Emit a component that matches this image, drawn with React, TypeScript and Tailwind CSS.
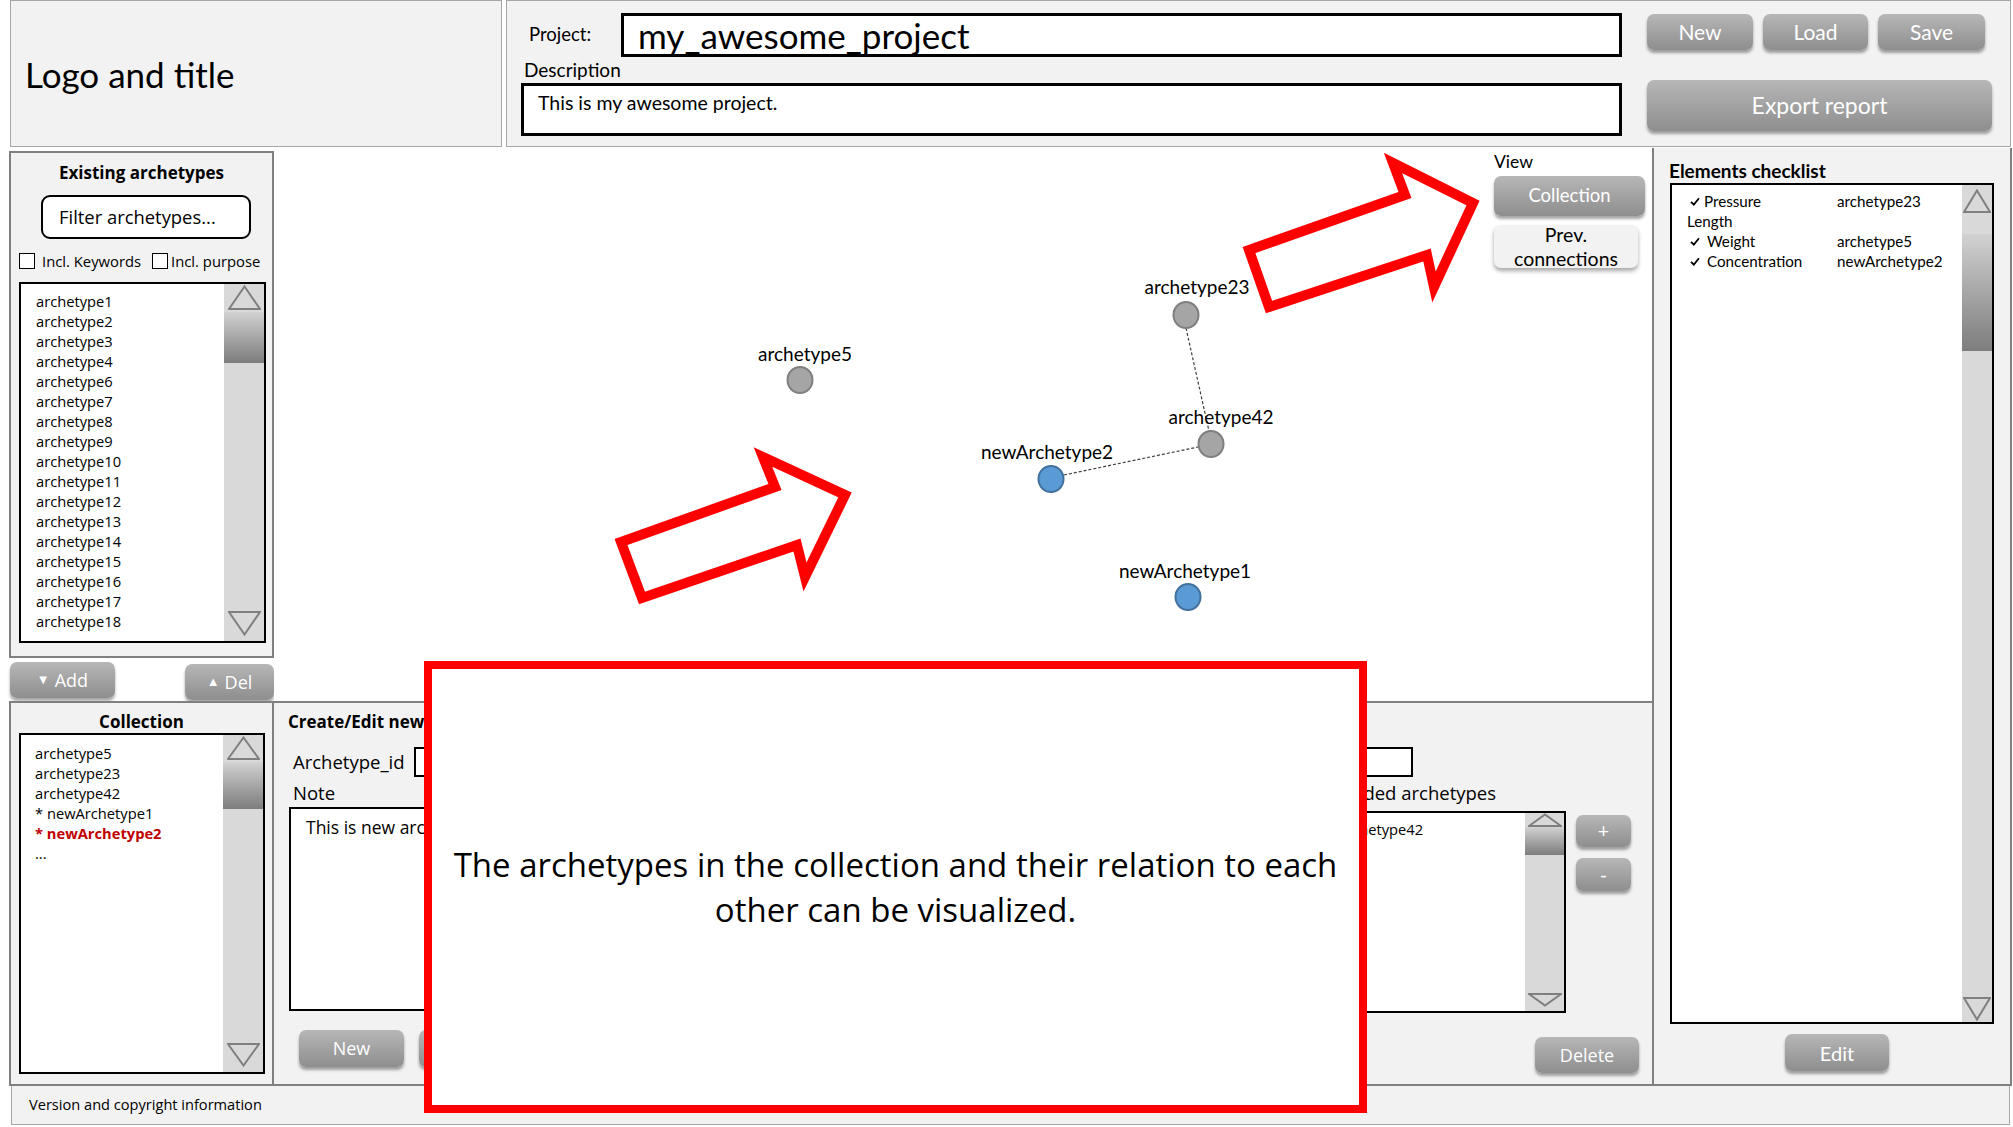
import React from "react";

const CAL = "[font-family:Lato,sans-serif]";
const SEG = "[font-family:'Open_Sans',sans-serif]";
const BTN =
  "bg-linear-to-b from-[#b7b7b7] to-[#8e8e8e] rounded-[7px] shadow-[0_3px_3px_rgba(0,0,0,0.35)] text-white flex items-center justify-center";

function Tri({ dir, w, h }: { dir: "up" | "down"; w: number; h: number }) {
  const pts =
    dir === "up"
      ? `1,${h - 1} ${w / 2},1.5 ${w - 1},${h - 1}`
      : `1,1 ${w / 2},${h - 1.5} ${w - 1},1`;
  return (
    <svg width={w} height={h} viewBox={`0 0 ${w} ${h}`}>
      <polygon points={pts} fill="none" stroke="#7f7f7f" strokeWidth={2} />
    </svg>
  );
}

type SBProps = {
  wCls: string;
  upCls: string;
  gapCls?: string;
  thumbCls: string;
  downCls: string;
  triW: number;
  triH: number;
};

function Scrollbar(p: SBProps) {
  return (
    <div className={`${p.wCls} self-stretch shrink-0 bg-[#d9d9d9] flex flex-col`}>
      <div className={`${p.upCls} flex justify-center`}>
        <Tri dir="up" w={p.triW} h={p.triH} />
      </div>
      {p.gapCls ? <div className={p.gapCls} /> : null}
      <div className={`${p.thumbCls} bg-linear-to-b from-[#d2d2d2] to-[#7d7d7d]`} />
      <div className="flex-1" />
      <div className={`${p.downCls} flex justify-center`}>
        <Tri dir="down" w={p.triW} h={p.triH} />
      </div>
    </div>
  );
}

function Check() {
  return (
    <svg width="10" height="9" viewBox="0 0 10 9" className="shrink-0">
      <path d="M1 4.8 L3.8 7.6 L9 1.2" fill="none" stroke="#000" strokeWidth="1.8" />
    </svg>
  );
}

const existing = [
  "archetype1",
  "archetype2",
  "archetype3",
  "archetype4",
  "archetype6",
  "archetype7",
  "archetype8",
  "archetype9",
  "archetype10",
  "archetype11",
  "archetype12",
  "archetype13",
  "archetype14",
  "archetype15",
  "archetype16",
  "archetype17",
  "archetype18",
];

type Node = { name: string; x: number; y: number; lx: number; ly: number; blue?: boolean };
const nodes: Node[] = [
  { name: "archetype5", x: 526, y: 232, lx: 531, ly: 206 },
  { name: "archetype23", x: 912, y: 167, lx: 923, ly: 139 },
  { name: "archetype42", x: 937, y: 296, lx: 947, ly: 269 },
  { name: "newArchetype2", x: 777, y: 331, lx: 773, ly: 304, blue: true },
  { name: "newArchetype1", x: 914, y: 449, lx: 911, ly: 423, blue: true },
];

export default function App() {
  return (
    <div className="w-[2013px] h-[1127px] bg-white relative overflow-hidden text-black">
      {/* Top row */}
      <div className="flex h-[148px]">
        <div className="ml-[10px] w-[492px] h-[147px] bg-[#f2f2f2] border border-[#a6a6a6] flex items-center pl-[14px]">
          <span className={`${CAL} text-[35px] leading-[42px]`}>Logo and title</span>
        </div>
        <div className="ml-[4px] w-[1505px] h-[147px] bg-[#f2f2f2] border border-[#a6a6a6] flex">
          <div className="w-[1140px] pl-[14px] pt-[12px] flex flex-col">
            <div className="flex items-center h-[44px]">
              <span className={`${CAL} text-[18.5px] w-[100px] pl-[8px]`}>Project:</span>
              <div className="w-[1001px] h-[44px] border-[3px] border-black bg-white flex items-center pl-[14px]">
                <span className={`${CAL} text-[35px] leading-[40px]`}>my_awesome_project</span>
              </div>
            </div>
            <div className={`${CAL} text-[19px] h-[26px] leading-[26px] pl-[3px]`}>Description</div>
            <div className="w-[1101px] h-[53px] border-[3px] border-black bg-white pl-[14px] pt-[5px]">
              <span className={`${CAL} text-[19.5px] leading-[24px]`}>This is my awesome project.</span>
            </div>
          </div>
          <div className="flex flex-col pt-[13px]">
            <div className="flex gap-[10px]">
              <div className={`${BTN} ${CAL} w-[106px] h-[36px] text-[21px]`}>New</div>
              <div className={`${BTN} ${CAL} w-[105px] h-[36px] text-[21px]`}>Load</div>
              <div className={`${BTN} ${CAL} w-[107px] h-[36px] text-[21px]`}>Save</div>
            </div>
            <div className={`${BTN} ${CAL} mt-[30px] w-[345px] h-[51px] text-[23px]`}>Export report</div>
          </div>
        </div>
      </div>

      {/* Main area */}
      <div className="flex h-[938px]">
        {/* Left column */}
        <div className="ml-[9px] w-[265px] flex flex-col">
          <div className="w-[265px] h-[507px] mt-[3px] border-2 border-[#808080] bg-[#f2f2f2] flex flex-col">
            <div className={`${SEG} font-bold text-[17px] leading-[24px] h-[24px] mt-[8px] text-center`}>
              Existing archetypes
            </div>
            <div
              className={`${SEG} ml-[30px] mt-[10px] w-[210px] h-[44px] rounded-[9px] border-2 border-black bg-white flex items-center pl-[16px] text-[18.4px]`}
            >
              Filter archetypes...
            </div>
            <div className={`${SEG} mt-[14px] h-[16px] flex items-center ml-[8px] text-[14.8px]`}>
              <div className="w-[16px] h-[16px] border-[1.5px] border-black bg-white shrink-0" />
              <span className="ml-[7px]">Incl. Keywords</span>
              <div className="ml-[11px] w-[16px] h-[16px] border-[1.5px] border-black bg-white shrink-0" />
              <span className="ml-[3px]">Incl. purpose</span>
            </div>
            <div className="ml-[8px] mt-[13px] w-[247px] h-[361px] border-2 border-black bg-white flex">
              <div className={`${SEG} flex-1 pl-[15px] pt-[7px] text-[14.7px]`}>
                {existing.map((a) => (
                  <div key={a} className="h-[20px] leading-[20px]">
                    {a}
                  </div>
                ))}
              </div>
              <Scrollbar
                wCls="w-[40px]"
                upCls="h-[28px] pt-[1px]"
                thumbCls="h-[51px]"
                downCls="h-[30px]"
                triW={33}
                triH={25}
              />
            </div>
          </div>
          <div className="h-[43px] flex items-start">
            <div className={`${BTN} ${SEG} ml-[1px] mt-[4px] w-[105px] h-[36px] text-[18px] gap-[5px]`}>
              <span className="text-[13px]">▼</span>
              <span>Add</span>
            </div>
            <div className={`${BTN} ${SEG} ml-auto mt-[6px] w-[89px] h-[36px] text-[18px] gap-[5px]`}>
              <span className="text-[13px]">▲</span>
              <span>Del</span>
            </div>
          </div>
          <div className="w-[265px] h-[385px] border-2 border-[#808080] bg-[#f2f2f2] flex flex-col">
            <div className={`${SEG} font-bold text-[17px] leading-[22px] h-[22px] mt-[8px] text-center`}>
              Collection
            </div>
            <div className="ml-[8px] w-[246px] h-[341px] border-2 border-black bg-white flex">
              <div className={`${SEG} flex-1 pl-[14px] pt-[8px] text-[14.7px]`}>
                <div className="h-[20px] leading-[20px]">archetype5</div>
                <div className="h-[20px] leading-[20px]">archetype23</div>
                <div className="h-[20px] leading-[20px]">archetype42</div>
                <div className="h-[20px] leading-[20px]">* newArchetype1</div>
                <div className="h-[20px] leading-[20px] text-[#c00000] font-bold">* newArchetype2</div>
                <div className="h-[20px] leading-[20px]">...</div>
              </div>
              <Scrollbar
                wCls="w-[40px]"
                upCls="h-[27px] pt-[1px]"
                thumbCls="h-[47px]"
                downCls="h-[29px]"
                triW={33}
                triH={24}
              />
            </div>
          </div>
        </div>

        {/* Center column */}
        <div className="w-[1378px] flex flex-col">
          <div className="h-[553px] bg-white relative flex justify-end">
            <svg className="absolute left-0 top-0" width="1378" height="553">
              <line x1="912" y1="180" x2="935" y2="283" stroke="#404040" strokeWidth="1.2" strokeDasharray="3 2" />
              <line x1="790" y1="327" x2="924" y2="299" stroke="#404040" strokeWidth="1.2" strokeDasharray="3 2" />
              {nodes.map((n) => (
                <ellipse
                  key={n.name}
                  cx={n.x}
                  cy={n.y}
                  rx="12.5"
                  ry="13"
                  fill={n.blue ? "#5b9bd5" : "#a5a5a5"}
                  stroke={n.blue ? "#41719c" : "#7f7f7f"}
                  strokeWidth="2"
                />
              ))}
            </svg>
            {nodes.map((n) => (
              <div
                key={n.name + "l"}
                className={`${CAL} absolute text-[19px] leading-[24px] h-[24px] w-[160px] text-center`}
                style={{ left: n.lx - 80, top: n.ly - 12 }}
              >
                {n.name}
              </div>
            ))}
            <div className="relative flex flex-col pt-[4px] pr-[7px] w-[158px]">
              <div className={`${CAL} text-[17.5px] leading-[20px] h-[20px]`}>View</div>
              <div className={`${BTN} ${CAL} mt-[4px] w-[151px] h-[40px] text-[18.5px]`}>Collection</div>
              <div
                className={`${CAL} mt-[9px] w-[144px] h-[43px] rounded-[7px] bg-[#f2f2f2] shadow-[0_3px_4px_rgba(0,0,0,0.35)] text-[19.5px] leading-[24px] flex flex-col items-center justify-center`}
              >
                <span>Prev.</span>
                <span>connections</span>
              </div>
            </div>
          </div>
          <div className="h-[385px] border-t-2 border-b-2 border-[#808080] bg-[#f2f2f2] flex flex-col pl-[14px]">
            <div className={`${SEG} font-bold text-[17px] leading-[22px] h-[22px] mt-[8px]`}>
              Create/Edit new archetype
            </div>
            <div className="flex items-center mt-[14px] h-[30px]">
              <span className={`${SEG} text-[18.5px] w-[126px] pl-[5px]`}>Archetype_id</span>
              <div className="w-[999px] h-[30px] border-2 border-black bg-white" />
            </div>
            <div className="flex mt-[4px]">
              <div className="ml-[1px] w-[1001px] flex flex-col">
                <div className={`${SEG} text-[18.5px] h-[24px] leading-[24px] pl-[4px]`}>Note</div>
                <div className="mt-[2px] h-[204px] border-2 border-black bg-white pl-[15px] pt-[6px]">
                  <span className={`${SEG} text-[17.5px] leading-[24px]`}>This is new archetype.</span>
                </div>
                <div className="flex gap-[15px] mt-[19px] ml-[10px]">
                  <div className={`${BTN} ${SEG} w-[105px] h-[37px] text-[18px]`}>New</div>
                  <div className={`${BTN} ${SEG} w-[105px] h-[37px] text-[18px]`}>Save</div>
                </div>
              </div>
              <div className="ml-[30px] w-[246px] flex flex-col">
                <div className={`${SEG} text-[18.5px] h-[24px] leading-[24px] pl-[2px] whitespace-nowrap`}>
                  Included archetypes
                </div>
                <div className="mt-[6px] h-[202px] border-2 border-black bg-white flex">
                  <div className={`${SEG} flex-1 pl-[16px] pt-[6px] text-[14.7px]`}>
                    <div className="h-[20px] leading-[20px]">archetype42</div>
                  </div>
                  <Scrollbar
                    wCls="w-[39px]"
                    upCls="h-[14px]"
                    thumbCls="h-[28px]"
                    downCls="h-[18px]"
                    triW={34}
                    triH={14}
                  />
                </div>
                <div className={`${BTN} ${SEG} mt-[24px] ml-[215px] w-[104px] h-[36px] text-[18px]`}>
                  Delete
                </div>
              </div>
              <div className="ml-[10px] pt-[34px] flex flex-col">
                <div className={`${BTN} ${SEG} w-[55px] h-[32px] text-[20px]`}>+</div>
                <div className={`${BTN} ${SEG} mt-[11px] w-[55px] h-[33px] text-[20px]`}>-</div>
              </div>
            </div>
          </div>
        </div>

        {/* Right column */}
        <div className="w-[360px] h-[938px] border-l-2 border-r-2 border-b-2 border-[#808080] bg-[#f2f2f2] flex flex-col">
          <div className={`${CAL} font-bold text-[19px] leading-[22px] h-[22px] mt-[12px] pl-[15px]`}>
            Elements checklist
          </div>
          <div className="ml-[16px] mt-[1px] w-[324px] h-[841px] border-2 border-black bg-white flex">
            <div className={`${CAL} flex-1 pl-[15px] pt-[6px] text-[15.2px]`}>
              <div className="flex h-[20px] items-center">
                <div className="w-[150px] flex items-center pl-[3px] gap-[4px]">
                  <Check />
                  <span>Pressure</span>
                </div>
                <span>archetype23</span>
              </div>
              <div className="flex h-[20px] items-center">
                <div className="w-[150px]">Length</div>
              </div>
              <div className="flex h-[20px] items-center">
                <div className="w-[150px] flex items-center pl-[3px] gap-[7px]">
                  <Check />
                  <span>Weight</span>
                </div>
                <span>archetype5</span>
              </div>
              <div className="flex h-[20px] items-center">
                <div className="w-[150px] flex items-center pl-[3px] gap-[7px]">
                  <Check />
                  <span>Concentration</span>
                </div>
                <span>newArchetype2</span>
              </div>
            </div>
            <Scrollbar
              wCls="w-[30px]"
              upCls="h-[28px] pt-[4px]"
              gapCls="h-[21px]"
              thumbCls="h-[117px]"
              downCls="h-[25px]"
              triW={28}
              triH={24}
            />
          </div>
          <div className={`${BTN} ${CAL} mt-[10px] ml-[131px] w-[104px] h-[37px] text-[20px]`}>Edit</div>
        </div>
      </div>

      {/* Footer */}
      <div className="ml-[11px] w-[1999px] h-[39px] border-l border-r border-b border-[#a6a6a6] bg-[#f2f2f2] flex items-center pl-[17px]">
        <span className={`${SEG} text-[14.6px]`}>Version and copyright information</span>
      </div>

      {/* Annotation arrows */}
      <svg className="absolute left-0 top-0 pointer-events-none" width="2013" height="1127">
        <polygon
          points="642,598 621,542 775,487 763,457 845,495 805,577 797,545"
          fill="none"
          stroke="#ff0000"
          strokeWidth="10"
          strokeLinejoin="miter"
        />
        <polygon
          points="1269,307 1249,250 1405,195 1393,163 1473,203 1434,287 1427,255"
          fill="none"
          stroke="#ff0000"
          strokeWidth="10"
          strokeLinejoin="miter"
        />
      </svg>

      {/* Annotation box */}
      <div className="absolute left-[424px] top-[661px] w-[943px] h-[452px] border-[8px] border-[#ff0000] bg-white flex items-center justify-center">
        <div className={`${SEG} text-[33px] leading-[45px] text-center`}>
          The archetypes in the collection and their relation to each
          <br />
          other can be visualized.
        </div>
      </div>
    </div>
  );
}
